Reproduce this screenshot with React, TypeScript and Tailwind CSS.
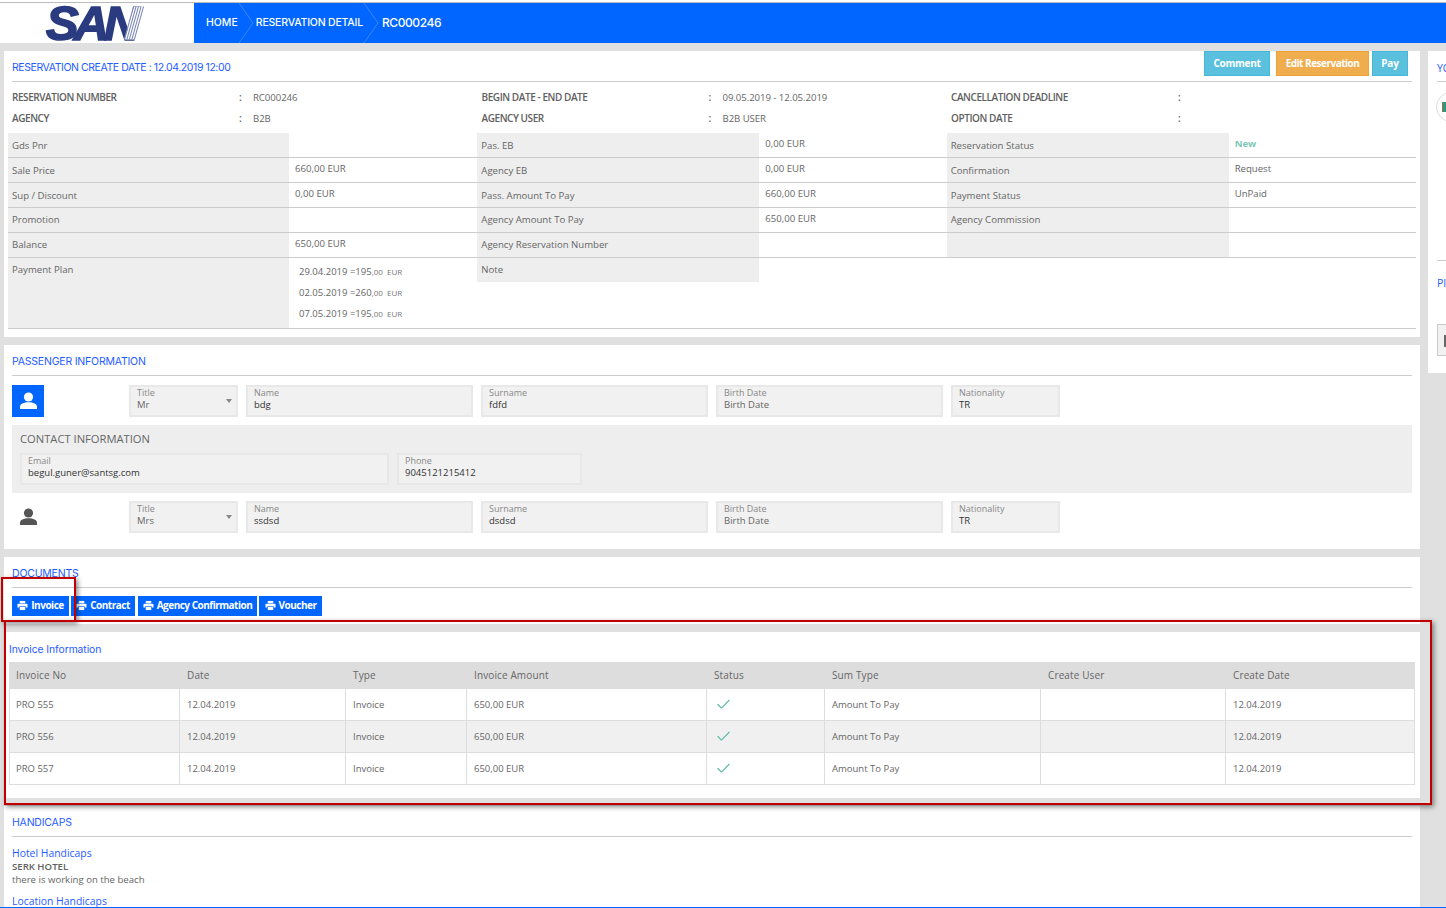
import React from "react";
import { Check } from "lucide-react";

const body = "font-['Open_Sans','Liberation_Sans',sans-serif]";
const head = "font-['Inter','Open_Sans',sans-serif]";

const Title = ({ children, right, tight }: { children: React.ReactNode; right?: React.ReactNode; tight?: boolean }) => (
  <div className="mx-2 flex h-[31px] items-end justify-between border-b border-[#cccccc] pb-[6px]">
    <span className={`${head} text-[10.5px] leading-[14px] ${tight ? "tracking-[-0.42px]" : "tracking-[-0.2px]"} text-[#1f5cff]`}>{children}</span>
    {right}
  </div>
);

const Info = ({ rows }: { rows: [string, string][] }) => (
  <div className="flex flex-col gap-[8px] pl-[8px]">
    {rows.map(([l, v]) => (
      <div key={l} className="flex h-[13px] items-center text-[10px] leading-[13px] text-[#606060]">
        <span className="w-[227px] font-semibold tracking-[-0.43px]">{l}</span>
        <span className="w-[14px] font-semibold">:</span>
        <span className="text-[9.6px] tracking-[-0.05px] text-[#666666]">{v}</span>
      </div>
    ))}
  </div>
);

const Cell = ({ label, value, accent, wide, up }: { label: string; value?: string; accent?: boolean; wide?: boolean; up?: boolean }) => (
  <div className="flex h-[25px] border-b border-[#cccccc]">
    <div className={`flex ${wide ? "w-[282px]" : "w-[281px]"} items-center bg-[#eeeeee] pl-[4px] ${up ? "pt-0" : "pt-[2px]"} text-[9.6px] text-[#666666]`}>{label}</div>
    <div className={`w-[187px] pl-[6px] pt-[4px] text-[9.6px] leading-[13px] ${accent ? "font-bold text-[#7fc8b8]" : "text-[#666666]"}`}>{value}</div>
  </div>
);

const Field = ({ label, value, width, select, dim }: { label: string; value: string; width: string; select?: boolean; dim?: boolean }) => (
  <div className={`relative h-[32px] ${width} border-2 border-[#e8e8e8] bg-[#f1f1f1] pl-[6px] text-[9.5px] leading-[12px]`}>
    <div className="text-[9px] text-[#888888]">{label}</div>
    <div className={dim ? "text-[#666666]" : "text-[#333333]"}>{value}</div>
    {select && <span className="absolute right-[4px] top-[12px] h-0 w-0 border-x-[3.5px] border-t-[4.5px] border-x-transparent border-t-[#888888]" />}
  </div>
);

const Passenger = ({ t, n, s, active }: { t: string; n: string; s: string; active?: boolean }) => (
  <div className="flex">
    <div className="w-[117px]">
      <div className={`flex h-[32px] w-[32px] items-center justify-center ${active ? "bg-[#0066ff]" : ""}`}>
        <svg viewBox="0 0 20 20" className="h-[20px] w-[20px] translate-x-[0.5px]" fill={active ? "#ffffff" : "#555555"}>
          <circle cx="10" cy="6" r="4.6" />
          <path d="M1.5 18v-2.4c0-2.8 3.8-4.4 8.5-4.4s8.5 1.6 8.5 4.4V18z" />
        </svg>
      </div>
    </div>
    <div className="flex gap-[8px]">
      <Field label="Title" value={t} width="w-[109px]" select dim />
      <Field label="Name" value={n} width="w-[227px]" />
      <Field label="Surname" value={s} width="w-[227px]" />
      <Field label="Birth Date" value="Birth Date" width="w-[227px]" dim />
      <Field label="Nationality" value="TR" width="w-[109px]" />
    </div>
  </div>
);

const PrinterIcon = () => (
  <svg viewBox="0 0 12 11" className="h-[11px] w-[11px]" fill="#ffffff">
    <path d="M3 0.5h6v2.6H3z" />
    <path d="M1.6 3.6h8.8c.7 0 1.1.5 1.1 1.1v3.1H9.6V6.4H2.4v1.4H.5V4.7c0-.6.5-1.1 1.1-1.1z" />
    <path d="M3 7h6v3.5H3z" />
  </svg>
);

const DocButton = ({ label, width, className }: { label: string; width: string; className?: string }) => (
  <div className={`flex h-[20px] ${width} ${className ?? ""} items-center justify-center gap-[3px] bg-[#0066ff] pb-[2px] text-[10px] font-bold tracking-[-0.5px] text-white`}>
    <PrinterIcon />
    {label}
  </div>
);

const headCols = ["w-[171px]", "w-[166px]", "w-[121px]", "w-[240px]", "w-[118px]", "w-[216px]", "w-[185px]", "w-[189px]"];
const bodyCols = ["w-[170px]", "w-[166px]", "w-[121px]", "w-[240px]", "w-[118px]", "w-[216px]", "w-[185px]", "w-[188px]"];
const bodyPad = ["pl-[6px]", "pl-[7px]", "pl-[7px]", "pl-[7px]", "pl-[7px]", "pl-[7px]", "pl-[7px]", "pl-[7px]"];
const headers = ["Invoice No", "Date", "Type", "Invoice Amount", "Status", "Sum Type", "Create User", "Create Date"];
const rows = ["PRO 555", "PRO 556", "PRO 557"];

const Crumb = () => (
  <svg viewBox="0 0 16 40" className="h-[40px] w-[16px]" fill="none" stroke="#3d85ff" strokeWidth="1">
    <path d="M1 0l14 20L1 40" />
  </svg>
);

export default function App() {
  return (
    <div className={`${body} relative h-[908px] w-[1446px] overflow-hidden border-b border-b-[#0066ff] bg-[#e0e0e0]`}>
      <div className="h-[3px] border-b border-[#bbbbbb] bg-white" />
      <header className="flex h-[40px] bg-[#0066ff] text-white">
        <div className="relative flex w-[194px] items-center overflow-hidden bg-white pl-[46px]">
          <span className="pr-[8px] font-['Liberation_Sans',sans-serif] text-[49px] font-bold italic leading-[38px] tracking-[-5px] text-[#2a3b80] [-webkit-text-stroke:1.6px_#2a3b80]">SAN</span>
          <svg viewBox="0 0 24 36" className="absolute left-[122px] top-[2px] h-[36px] w-[22px]" stroke="#7d88b8" strokeWidth="1.1">
            <path fill="#ffffff" stroke="none" d="M3 36L13 0h11L14 36z" />
            <path d="M13.5 36L23.5 0M10.8 36L20.8 0M8 36L18 0M5.3 36L15.3 0M2.6 36L12.6 0" />
          </svg>
        </div>
        <nav className="flex items-center">
          <span className={`${head} ml-[12px] text-[10.5px] font-medium`}>HOME</span>
          <Crumb />
          <span className={`${head} ml-[2px] text-[10.5px] font-medium tracking-[-0.2px]`}>RESERVATION DETAIL</span>
          <Crumb />
          <span className={`${head} ml-[3px] text-[12px] font-medium tracking-[-0.4px]`}>RC000246</span>
        </nav>
      </header>

      <div className="mt-[8px] flex gap-[8px] pl-[4px]">
        <main className="flex w-[1416px] flex-col gap-[8px]">
          <section className="relative h-[286px] bg-white">
            <Title tight>RESERVATION CREATE DATE : 12.04.2019 12:00</Title>
            <div className="absolute right-[12px] top-0 flex text-[10px] font-bold text-white">
              <div className="flex h-[25px] w-[66px] items-center justify-center border border-[#46b8da] bg-[#5bc0de] tracking-[-0.3px]">Comment</div>
              <div className="ml-[6px] flex h-[25px] w-[93px] items-center justify-center border border-[#eea236] bg-[#f0ad4e] tracking-[-0.5px]">Edit Reservation</div>
              <div className="ml-[3px] flex h-[25px] w-[36px] items-center justify-center border border-[#46b8da] bg-[#5bc0de] tracking-[-0.2px]">Pay</div>
            </div>
            <div className="grid h-[51px] grid-cols-[469.5px_469.5px_1fr] content-start pt-[9px]">
              <Info rows={[["RESERVATION NUMBER", "RC000246"], ["AGENCY", "B2B"]]} />
              <Info rows={[["BEGIN DATE - END DATE", "09.05.2019 - 12.05.2019"], ["AGENCY USER", "B2B USER"]]} />
              <Info rows={[["CANCELLATION DEADLINE", ""], ["OPTION DATE", ""]]} />
            </div>
            <div className="mx-[4px] grid w-[1408px] grid-cols-3 border-b border-[#cccccc]">
              <div>
                <Cell label="Gds Pnr" />
                <Cell label="Sale Price" value="660,00 EUR" />
                <Cell label="Sup / Discount" value="0,00 EUR" />
                <Cell label="Promotion" up />
                <Cell label="Balance" up value="650,00 EUR" />
                <div className="flex h-[70px]">
                  <div className="w-[281px] bg-[#eeeeee] pl-[4px] pt-[5px] text-[9.6px] leading-[13px] text-[#666666]">Payment Plan</div>
                  <div className="flex flex-col gap-[8px] pl-[10px] pt-[7px] text-[9.5px] leading-[13px] text-[#666666]">
                    {["29.04.2019 =195", "02.05.2019 =260", "07.05.2019 =195"].map((d) => (
                      <div key={d}>{d}<span className="text-[8px] text-[#777777]">,00 &nbsp;EUR</span></div>
                    ))}
                  </div>
                </div>
              </div>
              <div>
                <Cell wide label="Pas. EB" value="0,00 EUR" />
                <Cell wide label="Agency EB" value="0,00 EUR" />
                <Cell wide label="Pass. Amount To Pay" value="660,00 EUR" />
                <Cell wide up label="Agency Amount To Pay" value="650,00 EUR" />
                <Cell wide up label="Agency Reservation Number" />
                <div className="flex h-[24px]">
                  <div className="w-[282px] bg-[#eeeeee] pl-[4px] pt-[5px] text-[9.6px] leading-[13px] text-[#666666]">Note</div>
                </div>
              </div>
              <div>
                <Cell wide label="Reservation Status" value="New" accent />
                <Cell wide label="Confirmation" value="Request" />
                <Cell wide label="Payment Status" value="UnPaid" />
                <Cell wide up label="Agency Commission" />
                <Cell wide up label="" />
              </div>
            </div>
          </section>

          <section className="h-[204px] bg-white">
            <Title>PASSENGER INFORMATION</Title>
            <div className="flex flex-col gap-[8px] px-[8px] pt-[9px]">
              <Passenger t="Mr" n="bdg" s="fdfd" active />
              <div className="h-[68px] bg-[#eeeeee] px-[8px] pt-[7px]">
                <div className="text-[11.2px] leading-[14px] text-[#666666]">CONTACT INFORMATION</div>
                <div className="mt-[7px] flex gap-[8px]">
                  <Field label="Email" value="begul.guner@santsg.com" width="w-[369px]" />
                  <Field label="Phone" value="9045121215412" width="w-[185px]" />
                </div>
              </div>
              <Passenger t="Mrs" n="ssdsd" s="dsdsd" />
            </div>
          </section>

          <section className="h-[67px] bg-white">
            <Title>DOCUMENTS</Title>
            <div className="flex pl-[8px] pt-[8px]">
              <DocButton label="Invoice" width="w-[57px]" />
              <DocButton label="Contract" width="w-[64px]" className="ml-[2px]" />
              <DocButton label="Agency Confirmation" width="w-[119px]" className="ml-[3px]" />
              <DocButton label="Voucher" width="w-[63px]" className="ml-[2px]" />
            </div>
          </section>

          <section className="h-[166px] bg-white pl-[5px] pt-[10px]">
            <div className={`${head} h-[20px] text-[10.3px] leading-[14px] tracking-[-0.05px] text-[#1f5cff]`}>Invoice Information</div>
            <div className="flex h-[27px] w-[1406px] items-center bg-[#dddddd] text-[10px] font-medium tracking-[0.12px] text-[#666666]">
              {headers.map((h, i) => (
                <div key={h} className={`${headCols[i]} pl-[7px]`}>{h}</div>
              ))}
            </div>
            {rows.map((r, ri) => (
              <div key={r} className={`flex h-[32px] w-[1406px] border-b border-l border-r border-[#dddddd] text-[9.5px] text-[#666666] ${ri === 1 ? "bg-[#f0f0f0]" : "bg-white"}`}>
                {[r, "12.04.2019", "Invoice", "650,00 EUR", "", "Amount To Pay", "", "12.04.2019"].map((v, i) => (
                  <div key={i} className={`${bodyCols[i]} ${bodyPad[i]} flex items-center pt-[2px] ${i < 7 ? "border-r border-[#dddddd]" : ""}`}>
                    {i === 4 ? <Check size={17} strokeWidth={1.5} className="ml-[1px] -translate-y-[1px] text-[#5cb8a5]" /> : v}
                  </div>
                ))}
              </div>
            ))}
          </section>

          <section className="h-[110px] bg-white">
            <Title>HANDICAPS</Title>
            <div className="px-[8px] pt-[9px] text-[9.6px] leading-[14px] text-[#666666]">
              <div className="text-[10.4px] text-[#1f5cff]">Hotel Handicaps</div>
              <div className="font-semibold text-[#606060]">SERK HOTEL</div>
              <div className="-mt-px">there is working on the beach</div>
              <div className="mt-[7px] text-[10.4px] text-[#1f5cff]">Location Handicaps</div>
            </div>
          </section>
        </main>

        <aside className="h-[322px] w-[18px] overflow-hidden bg-white pl-[9px]">
          <div className="h-[31px] w-[40px] border-b border-[#cccccc] pt-[10px] text-[10.5px] leading-[14px] text-[#1f5cff]">YO</div>
          <div className="-ml-px mt-[10px] flex h-[30px] w-[30px] items-center rounded-full border border-[#dddddd] pl-[5px]">
            <div className="h-[10px] w-[6px] border-l border-[#a07040] bg-[#2a9a80]" />
          </div>
          <div className="mt-[138px] h-px w-[40px] bg-[#cccccc]" />
          <div className="pt-[15px] text-[10.5px] leading-[14px] text-[#1f5cff]">PI</div>
          <div className="mt-[34px] h-[32px] w-[40px] border border-[#cccccc] bg-[#f1f1f1] pl-[6px] pt-[10px]">
            <div className="h-[12px] w-[3px] bg-[#666666]" />
          </div>
        </aside>
      </div>

      <div className="absolute left-[1px] top-[577px] h-[45px] w-[75px] border-[2px] border-[#c00000] shadow-[2px_2px_5px_rgba(0,0,0,0.45)]" />
      <div className="absolute left-[4px] top-[620px] h-[185px] w-[1428px] border-[2px] border-[#c00000] shadow-[2px_2px_5px_rgba(0,0,0,0.45)]" />
    </div>
  );
}
